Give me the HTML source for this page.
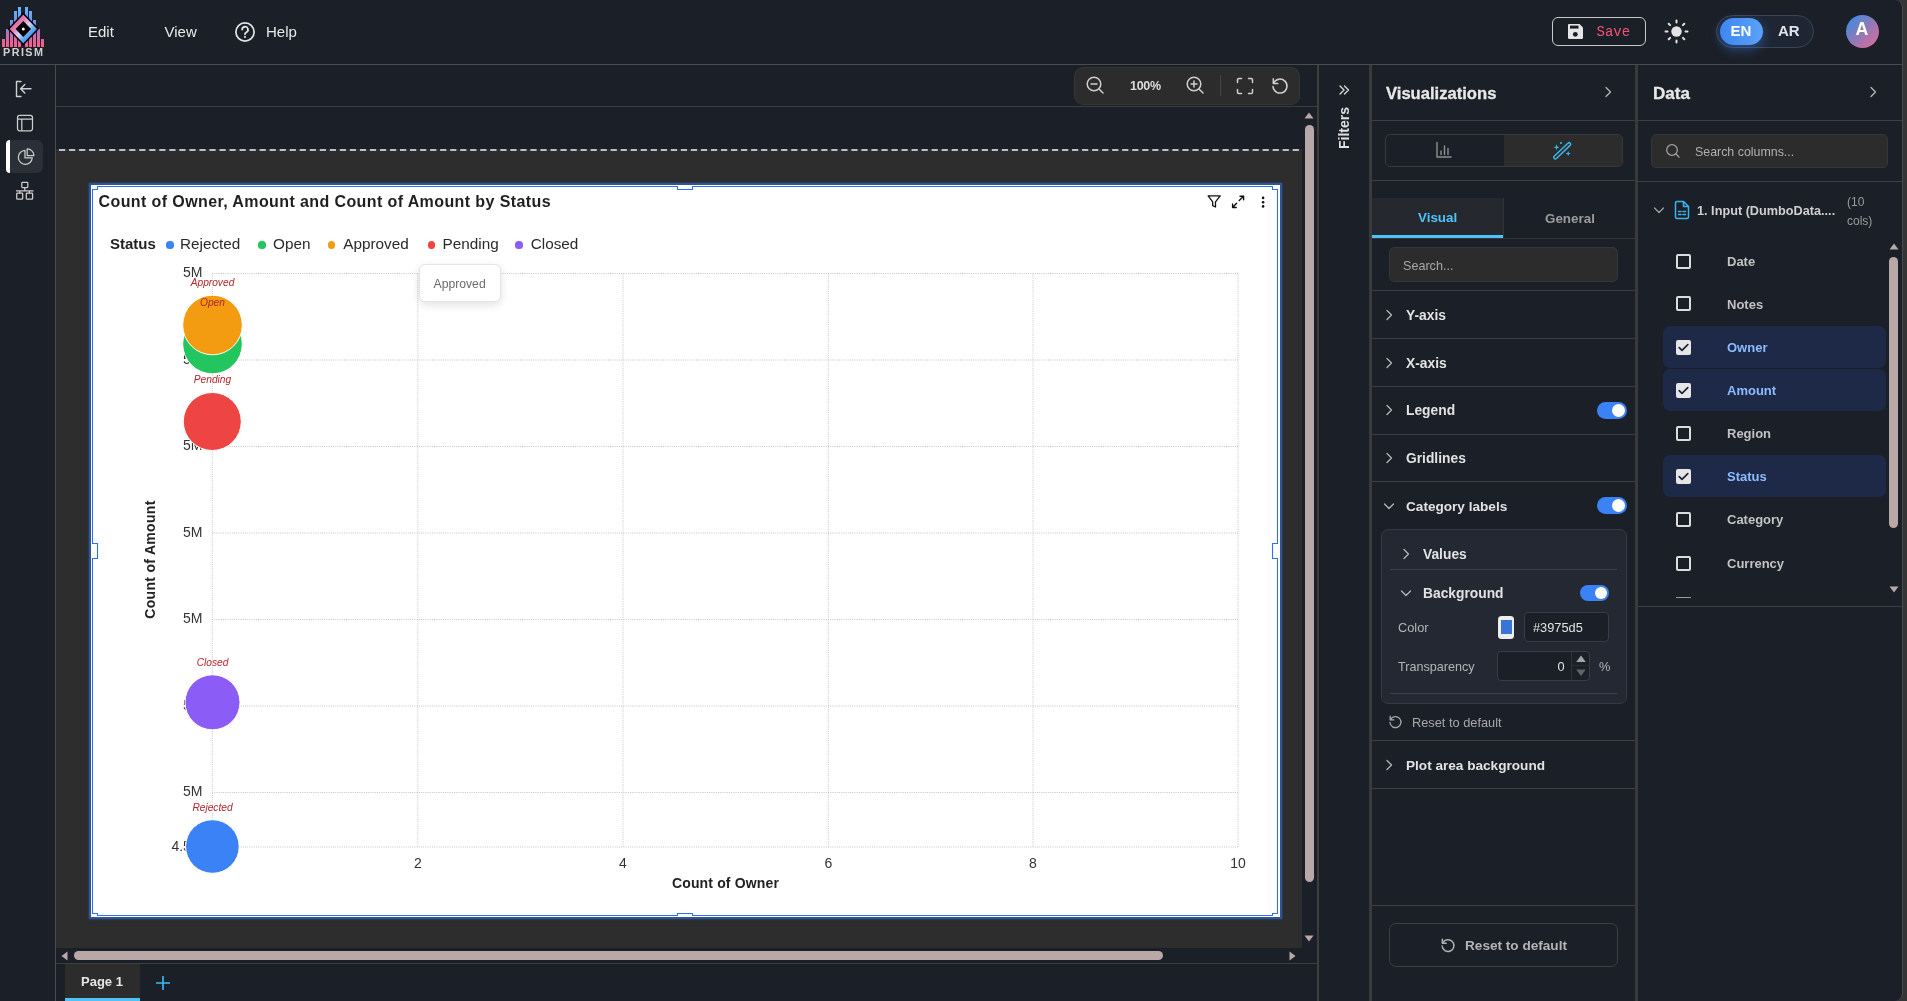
<!DOCTYPE html>
<html><head><meta charset="utf-8">
<style>
*{box-sizing:border-box;margin:0;padding:0}
html,body{width:1907px;height:1001px;overflow:hidden;background:#353535;font-family:"Liberation Sans",sans-serif}
.a{position:absolute}
#app{will-change:transform;position:absolute;left:0;top:0;width:1903px;height:1001px;background:#1b1f27;border-right:1px solid #4a4a4a;border-radius:0 8px 8px 0;overflow:hidden}
.hl{position:absolute;height:1px;background:#3f3f3f}
.vl{position:absolute;width:1px;background:#3f3f3f}
.t{position:absolute;white-space:nowrap;line-height:1}
svg{position:absolute;overflow:visible}
</style></head><body>
<div id="app">
<!-- HEADER -->
<div class="hl" style="left:0;top:64px;width:1903px;background:#4a4a4a"></div>
<div class="t" style="left:88px;top:23.6px;font-size:15px;color:#e8e8e8">Edit</div>
<div class="t" style="left:164.5px;top:23.6px;font-size:15px;color:#e8e8e8">View</div>
<div class="t" style="left:266px;top:23.6px;font-size:15px;color:#e8e8e8">Help</div>
<svg style="left:0;top:0" width="50" height="64">
 <defs>
  <linearGradient id="bars" gradientUnits="userSpaceOnUse" x1="0" y1="7" x2="0" y2="47"><stop offset="0" stop-color="#62b6ff"/><stop offset="0.45" stop-color="#6f8ee8"/><stop offset="0.6" stop-color="#b071c0"/><stop offset="1" stop-color="#ff5c86"/></linearGradient>
  <linearGradient id="dia" gradientUnits="userSpaceOnUse" x1="14" y1="20" x2="33" y2="39"><stop offset="0" stop-color="#e0609c"/><stop offset="0.25" stop-color="#e27fb4"/><stop offset="0.5" stop-color="#dcd0f2"/><stop offset="0.75" stop-color="#5aa8f0"/><stop offset="1" stop-color="#2a90f0"/></linearGradient>
  <linearGradient id="txt" x1="0" y1="0" x2="1" y2="0"><stop offset="0" stop-color="#bfbfbf"/><stop offset="0.5" stop-color="#f0f0f0"/><stop offset="1" stop-color="#bfbfbf"/></linearGradient>
 </defs>
 <g fill="url(#bars)">
  <rect x="2" y="39" width="3" height="8"/><rect x="6" y="29" width="3" height="18"/><rect x="10" y="20" width="3" height="27"/><rect x="14" y="11" width="3" height="36"/><rect x="18" y="7" width="3" height="40"/>
  <rect x="25" y="7" width="3" height="40"/><rect x="29" y="11" width="3" height="36"/><rect x="33" y="20" width="3" height="27"/><rect x="37" y="29" width="3" height="18"/><rect x="41" y="39" width="3" height="8"/>
 </g>
 <path d="M23.3 13.5 L38 29 L23.3 44.5 L8.6 29 Z" fill="url(#dia)" stroke="#000" stroke-width="1.5"/>
 <path d="M23.3 21 L31 29 L23.3 37 L15.6 29 Z" fill="#000"/>
 <circle cx="23.3" cy="29" r="1.5" fill="#fff"/>
 <text x="3" y="56" textLength="40" lengthAdjust="spacing" font-family="Liberation Sans" font-weight="bold" font-size="10.8" fill="#d0d0d0">PRISM</text>
</svg>
<svg style="left:234px;top:21px" width="22" height="22" viewBox="0 0 22 22"><circle cx="11" cy="11" r="9.1" fill="none" stroke="#e4e4e4" stroke-width="1.7"/><path d="M8.2 8.6a2.9 2.9 0 1 1 4.2 2.6c-.9.5-1.4 1-1.4 2.1" fill="none" stroke="#e4e4e4" stroke-width="1.8" stroke-linecap="round"/><circle cx="11" cy="16" r="1.1" fill="#e4e4e4"/></svg>
<!-- save -->
<div class="a" style="left:1552px;top:17px;width:94px;height:29px;border:1.6px solid #c9c9c9;border-radius:6px"></div>
<svg style="left:1567px;top:23px" width="17" height="17" viewBox="0 0 17 17"><path d="M1 2.2C1 1.5 1.5 1 2.2 1H12.5L16 4.5V14.8C16 15.5 15.5 16 14.8 16H2.2C1.5 16 1 15.5 1 14.8Z" fill="#e6e6e6"/><rect x="3" y="2.6" width="8.5" height="3" fill="#1b1f27"/><circle cx="8.3" cy="11.3" r="2.4" fill="#1b1f27"/></svg>
<div class="t" style="left:1596.5px;top:25px;font-family:'Liberation Mono';font-size:14px;color:#f25476">Save</div>
<svg style="left:1664px;top:19px" width="25" height="25" viewBox="0 0 25 25"><circle cx="12.5" cy="12.5" r="5.2" fill="#e4e4e4"/><g stroke="#e4e4e4" stroke-width="2" stroke-linecap="round"><path d="M12.5 1.5v2M12.5 21.5v2M1.5 12.5h2M21.5 12.5h2M4.7 4.7l1.4 1.4M18.9 18.9l1.4 1.4M4.7 20.3l1.4-1.4M18.9 6.1l1.4-1.4"/></g></svg>
<!-- EN/AR -->
<div class="a" style="left:1716px;top:15px;width:98px;height:33px;border:1.3px solid #3b4558;border-radius:17px;background:#1f2633"></div>
<div class="a" style="left:1720px;top:18px;width:43px;height:27px;border-radius:14px;background:linear-gradient(90deg,#3f86f2,#5aa2f8);box-shadow:0 4px 12px rgba(59,130,246,0.45)"></div>
<div class="t" style="left:1730.5px;top:23px;font-size:15px;font-weight:bold;color:#fff">EN</div>
<div class="t" style="left:1778px;top:23px;font-size:15px;font-weight:bold;color:#dfe3ea">AR</div>
<div class="a" style="left:1846px;top:15px;width:33px;height:33px;border-radius:50%;background:linear-gradient(135deg,#3d8be0 10%,#8f7ab8 50%,#e06a9a 95%)"></div>
<div class="t" style="left:1855.4px;top:20.8px;font-size:17.8px;font-weight:bold;color:#fff">A</div>

<!-- SIDEBAR -->
<div class="vl" style="left:55px;top:65px;height:936px;background:#4a4a4a"></div>
<svg style="left:14px;top:79px" width="20" height="20" viewBox="0 0 20 20"><g fill="none" stroke="#d0d0d0" stroke-width="1.4" stroke-linecap="round" stroke-linejoin="round"><path d="M7 2.5H2.5V17.5H7"/><path d="M17 9.8H7M10.8 5.6L6.6 9.8L10.8 14"/></g></svg>
<svg style="left:16px;top:114px" width="18" height="18" viewBox="0 0 18 18"><g fill="none" stroke="#cdcdcd" stroke-width="1.25"><rect x="1.5" y="1.3" width="15" height="15.5" rx="2.2"/><path d="M1.5 5.2H16.5M5.8 5.2V16.8"/></g></svg>
<div class="a" style="left:6px;top:140px;width:37px;height:33px;background:#2b2f38;border-radius:6px"></div>
<div class="a" style="left:6px;top:140px;width:4px;height:33px;background:#fff;border-radius:4px 0 0 4px"></div>
<svg style="left:17px;top:148px" width="18" height="18" viewBox="0 0 18 18"><g fill="none" stroke="#cdcdcd" stroke-width="1.25" stroke-linejoin="round"><path d="M8 2.3A7 7 0 1 0 15.3 9.8H8Z"/><path d="M10.2 0.8A6.8 6.8 0 0 1 16.9 7.6H10.2Z"/></g></svg>
<svg style="left:15px;top:181px" width="20" height="20" viewBox="0 0 20 20"><g fill="none" stroke="#cdcdcd" stroke-width="1.25"><rect x="6.8" y="1.3" width="6" height="5.2" rx="0.8"/><rect x="1.7" y="12.2" width="6" height="6" rx="0.8"/><rect x="11.3" y="12.2" width="6.3" height="6" rx="0.8"/><path d="M9.8 6.5V9.8M1 9.8H18.5M4.7 9.8V12.2M14.4 9.8V12.2"/></g></svg>

<!-- CANVAS AREA -->
<div class="hl" style="left:56px;top:106px;width:1262px;background:#3d3d3d"></div>
<div class="a" style="left:56px;top:149px;width:1246px;height:799px;background:#2d2d2d"></div>
<!-- CHART -->
<div class="a" style="left:88.5px;top:182.5px;width:1193px;height:736.5px;background:#fff;border:2.4px solid #2d5597;box-shadow:0 0 2px #2d5597"></div>
<svg style="left:0;top:0" width="1907" height="1001"><g stroke="#c4c4c4" stroke-width="1" stroke-dasharray="1 1.2"><line x1="212.4" y1="273.5" x2="212.4" y2="847"/><line x1="417.8" y1="273.5" x2="417.8" y2="847"/><line x1="623" y1="273.5" x2="623" y2="847"/><line x1="828.4" y1="273.5" x2="828.4" y2="847"/><line x1="1033" y1="273.5" x2="1033" y2="847"/><line x1="1238" y1="273.5" x2="1238" y2="847"/><line x1="212" y1="273.5" x2="1238.5" y2="273.5"/><line x1="212" y1="360" x2="1238.5" y2="360"/><line x1="212" y1="446.5" x2="1238.5" y2="446.5"/><line x1="212" y1="533" x2="1238.5" y2="533"/><line x1="212" y1="619.5" x2="1238.5" y2="619.5"/><line x1="212" y1="706" x2="1238.5" y2="706"/><line x1="212" y1="792.5" x2="1238.5" y2="792.5"/><line x1="212" y1="847" x2="1238.5" y2="847"/></g><g font-family="Liberation Sans" font-size="14" fill="#333"><text x="202.5" y="276.5" text-anchor="end">5M</text><text x="202.5" y="363.5" text-anchor="end">5M</text><text x="202.5" y="450.0" text-anchor="end">5M</text><text x="202.5" y="536.5" text-anchor="end">5M</text><text x="202.5" y="623.0" text-anchor="end">5M</text><text x="202.5" y="709.5" text-anchor="end">5M</text><text x="202.5" y="796.0" text-anchor="end">5M</text><text x="202.5" y="850.5" text-anchor="end">4.5M</text><text x="417.8" y="867.5" text-anchor="middle">2</text><text x="623" y="867.5" text-anchor="middle">4</text><text x="828.4" y="867.5" text-anchor="middle">6</text><text x="1033" y="867.5" text-anchor="middle">8</text><text x="1238" y="867.5" text-anchor="middle">10</text></g><text x="725.5" y="888.3" text-anchor="middle" font-family="Liberation Sans" font-size="14" font-weight="bold" fill="#222" letter-spacing="0.15">Count of Owner</text><text transform="translate(155 559.5) rotate(-90)" x="0" y="0" text-anchor="middle" font-family="Liberation Sans" font-size="14" font-weight="bold" fill="#222" letter-spacing="0.3">Count of Amount</text><g stroke="#fff" stroke-width="1"><circle cx="212.4" cy="846.5" r="26.8" fill="#3b82f6"/><circle cx="212.5" cy="702.3" r="27.5" fill="#8b5cf6"/><circle cx="212.3" cy="421.5" r="29" fill="#ef4444"/><circle cx="212.5" cy="344" r="29.8" fill="#22c55e"/><circle cx="212.5" cy="325" r="29.8" fill="#f39c12"/></g><g font-family="Liberation Sans" font-size="10.2" font-style="italic" fill="#b3262b" text-anchor="middle"><text x="212.5" y="286.1">Approved</text><text x="212.5" y="306.1">Open</text><text x="212.5" y="383.1">Pending</text><text x="212.5" y="666.1">Closed</text><text x="212.5" y="810.6">Rejected</text></g></svg>
<div class="t" style="left:98.5px;top:194px;font-size:16px;font-weight:bold;color:#1f1f1f;letter-spacing:0.4px">Count of Owner, Amount and Count of Amount by Status</div>
<div class="t" style="left:110px;top:236px;font-size:15px;font-weight:bold;color:#1f1f1f">Status</div>
<div class="a" style="left:166.4px;top:241.4px;width:7.2px;height:7.2px;border-radius:50%;background:#3b82f6"></div>
<div class="t" style="left:180px;top:236px;font-size:15.3px;color:#2a2a2a">Rejected</div>
<div class="a" style="left:258.4px;top:241.4px;width:7.2px;height:7.2px;border-radius:50%;background:#22c55e"></div>
<div class="t" style="left:273px;top:236px;font-size:15.3px;color:#2a2a2a">Open</div>
<div class="a" style="left:328.09999999999997px;top:241.4px;width:7.2px;height:7.2px;border-radius:50%;background:#f39c12"></div>
<div class="t" style="left:343.2px;top:236px;font-size:15.3px;color:#2a2a2a">Approved</div>
<div class="a" style="left:427.59999999999997px;top:241.4px;width:7.2px;height:7.2px;border-radius:50%;background:#ef4444"></div>
<div class="t" style="left:442.6px;top:236px;font-size:15.3px;color:#2a2a2a">Pending</div>
<div class="a" style="left:515.4px;top:241.4px;width:7.2px;height:7.2px;border-radius:50%;background:#8b5cf6"></div>
<div class="t" style="left:530.7px;top:236px;font-size:15.3px;color:#2a2a2a">Closed</div>
<div class="a" style="left:419px;top:263.5px;width:82px;height:38.5px;background:#fff;border:1px solid #e3e3e3;border-radius:6px;box-shadow:0 3px 10px rgba(0,0,0,0.12)"></div>
<div class="t" style="left:433.5px;top:278px;font-size:12.2px;color:#6a6a6a">Approved</div>
<svg style="left:1205px;top:193px" width="18" height="17" viewBox="1205 193 18 17"><path d="M1208.2 195.8H1220.2L1215.5 201.8V207L1212.7 205.6V201.8Z" fill="none" stroke="#111" stroke-width="1.3" stroke-linejoin="round"/></svg>
<svg style="left:1229px;top:193px" width="18" height="18" viewBox="1229 193 18 18"><g fill="none" stroke="#111" stroke-width="1.4" stroke-linecap="round" stroke-linejoin="round"><path d="M1239.2 200.5L1243.6 196.2M1240 196.2H1243.6V199.8"/><path d="M1236.6 203.2L1232.6 207.5M1232.6 203.9V207.5H1236.2"/></g></svg>
<svg style="left:1259px;top:194px" width="8" height="16" viewBox="1259 194 8 16"><g fill="#111"><circle cx="1263.1" cy="197.9" r="1.3"/><circle cx="1263.1" cy="202.2" r="1.3"/><circle cx="1263.1" cy="206.4" r="1.3"/></g></svg>
<svg style="left:0;top:0" width="1907" height="1001"><g fill="none" stroke="#2f6ff0" stroke-width="1.1"><path d="M97.5 186.5H677.5V189.5H692.5V186.5H1272.5V189.5H1277.5V543.5H1272.5V558.5H1277.5V913.5H1272.5V915.5H692.5V913.5H677.5V915.5H97.5V913.5H92.5V558.5H97.5V543.5H92.5V189.5H97.5Z"/></g></svg>
<div class="a" style="left:1317px;top:65px;width:2px;height:936px;background:#413e3a"></div>
<!-- toolbar -->
<div class="a" style="left:1074px;top:67px;width:226px;height:38px;background:#2c2c2c;border:1px solid #353535;border-radius:9px"></div>
<svg style="left:1085px;top:75px" width="20" height="20" viewBox="0 0 20 20"><g fill="none" stroke="#cfcfcf" stroke-width="1.5" stroke-linecap="round"><circle cx="9" cy="9" r="6.8"/><path d="M14 14L18 18M6 9H12"/></g></svg>
<div class="t" style="left:1130px;top:80px;font-size:12.5px;font-weight:bold;color:#dcdcdc;letter-spacing:-0.3px">100%</div>
<svg style="left:1185px;top:75px" width="20" height="20" viewBox="0 0 20 20"><g fill="none" stroke="#cfcfcf" stroke-width="1.5" stroke-linecap="round"><circle cx="9" cy="9" r="6.8"/><path d="M14 14L18 18M6 9H12M9 6V12"/></g></svg>
<div class="a" style="left:1220px;top:75px;width:1px;height:21px;background:#444"></div>
<svg style="left:1236px;top:77px" width="18" height="18" viewBox="0 0 18 18"><g fill="none" stroke="#cfcfcf" stroke-width="1.5" stroke-linecap="round" stroke-linejoin="round"><path d="M1.5 5.5V2.8Q1.5 1.5 2.8 1.5H5.5M12.5 1.5H15.2Q16.5 1.5 16.5 2.8V5.5M16.5 12.5V15.2Q16.5 16.5 15.2 16.5H12.5M5.5 16.5H2.8Q1.5 16.5 1.5 15.2V12.5"/></g></svg>
<svg style="left:1271px;top:77px" width="18" height="18" viewBox="0 0 18 18"><g fill="none" stroke="#cfcfcf" stroke-width="1.5" stroke-linecap="round" stroke-linejoin="round"><path d="M2.6 6.2A7 7 0 1 1 2 9.5"/><path d="M2.3 1.8V6.4H6.8"/></g></svg>
<!-- dashed line -->
<svg style="left:0;top:140px" width="1310" height="20"><line x1="59" y1="10" x2="1300" y2="10" stroke="#b9c0cc" stroke-width="2" stroke-dasharray="6.2 3.83"/></svg>
<!-- v scrollbar -->
<svg style="left:1303px;top:111px" width="12" height="9" viewBox="0 0 12 9"><path d="M6 1.5L10.5 7.5H1.5Z" fill="#b8a8a8"/></svg>
<div class="a" style="left:1305px;top:125px;width:9px;height:757px;background:#b8a8a8;border-radius:5px"></div>
<svg style="left:1303px;top:934px" width="12" height="9" viewBox="0 0 12 9"><path d="M6 7.5L10.5 1.5H1.5Z" fill="#b8a8a8"/></svg>
<!-- h scrollbar -->
<svg style="left:58px;top:950px" width="12" height="12" viewBox="0 0 12 12"><path d="M3.5 6L9.5 1.5V10.5Z" fill="#b8a8a8"/></svg>
<div class="a" style="left:74px;top:951px;width:1089px;height:9px;background:#b8a8a8;border-radius:5px"></div>
<svg style="left:1287px;top:950px" width="12" height="12" viewBox="0 0 12 12"><path d="M8.5 6L2.5 1.5V10.5Z" fill="#b8a8a8"/></svg>
<div class="hl" style="left:56px;top:963px;width:1262px;background:#3d3d3d"></div>
<!-- page tabs -->
<div class="a" style="left:65px;top:964px;width:75px;height:37px;background:#2c2c2c"></div>
<div class="a" style="left:65px;top:998px;width:75px;height:3px;background:#4fc3f7"></div>
<div class="t" style="left:81px;top:975px;font-size:13px;font-weight:bold;color:#e6e6e6">Page 1</div>
<svg style="left:155px;top:975px" width="16" height="16" viewBox="0 0 16 16"><path d="M8 1V15M1 8H15" stroke="#38bdf8" stroke-width="1.6"/></svg>
<!-- filters column -->
<svg style="left:1338px;top:84px" width="12" height="12" viewBox="0 0 12 12"><g fill="none" stroke="#d6d6d6" stroke-width="1.4" stroke-linecap="round" stroke-linejoin="round"><path d="M2 2L6 6L2 10M6.5 2L10.5 6L6.5 10"/></g></svg>
<div class="t" style="left:1344px;top:128px;font-size:14px;font-weight:bold;color:#e0e0e0;transform:translate(-50%,-50%) rotate(-90deg);transform-origin:center">Filters</div>

<!-- VIS PANEL -->
<div class="a" style="left:1369px;top:65px;width:3px;height:936px;background:#3a3a3a"></div>
<div class="a" style="left:1635px;top:65px;width:3px;height:936px;background:#3a3a3a"></div>
<div class="t" style="left:1386px;top:86px;font-size:16.6px;font-weight:bold;color:#e8e8e8;-webkit-text-stroke:0.3px #e8e8e8">Visualizations</div>
<svg style="left:1602px;top:86px" width="12" height="12" viewBox="0 0 12 12"><path d="M4 1.5L8.5 6L4 10.5" fill="none" stroke="#b5b5b5" stroke-width="1.3" stroke-linecap="round" stroke-linejoin="round"/></svg>
<div class="hl" style="left:1372px;top:120px;width:263px"></div>
<div class="a" style="left:1385px;top:134px;width:238px;height:33px;border:1px solid #3a3a3a;border-radius:5px;overflow:hidden"><div class="a" style="left:118px;top:0;width:120px;height:33px;background:#2c2c2c"></div></div>
<svg style="left:1435px;top:141px" width="18" height="18" viewBox="0 0 18 18"><g fill="none" stroke="#8e8e8e" stroke-width="1.4" stroke-linecap="round"><path d="M2 1.5V16H16"/><path d="M6 10V13.5M9.5 5V13.5M13 7.5V13.5"/></g></svg>
<svg style="left:1551px;top:140px" width="22" height="20" viewBox="0 0 22 20"><g fill="none" stroke="#38b6f0" stroke-width="1.5" stroke-linecap="round" stroke-linejoin="round"><path d="M3.2 16.3L16.9 3.2Q18 2.1 19.1 3.2Q20.2 4.3 19.1 5.4L5.4 18.5Q4.3 19.6 3.2 18.5Q2.1 17.4 3.2 16.3Z"/></g><g fill="#38b6f0"><path d="M5.5 4.2L6.3 6.4L8.5 7.2L6.3 8L5.5 10.2L4.7 8L2.5 7.2L4.7 6.4Z"/><path d="M17.2 11L17.9 12.8L19.7 13.5L17.9 14.2L17.2 16L16.5 14.2L14.7 13.5L16.5 12.8Z"/><circle cx="10" cy="3" r="1.1"/></g></svg>
<div class="hl" style="left:1372px;top:180px;width:263px"></div>
<!-- tabs -->
<div class="a" style="left:1372px;top:198px;width:131px;height:40px;background:#25292f"></div>
<div class="a" style="left:1503px;top:198px;width:1px;height:40px;background:#333"></div>
<div class="a" style="left:1372px;top:235px;width:131px;height:3px;background:#4fc3f7"></div>
<div class="hl" style="left:1372px;top:238px;width:263px;background:#363636"></div>
<div class="t" style="left:1418px;top:211px;font-size:13.4px;font-weight:bold;color:#4fc3f7">Visual</div>
<div class="t" style="left:1545px;top:212px;font-size:13.4px;font-weight:bold;color:#9c9c9c">General</div>
<div class="a" style="left:1389px;top:247px;width:229px;height:35px;background:#2c2c2c;border:1px solid #363636;border-radius:5px"></div>
<div class="t" style="left:1403px;top:259.5px;font-size:12.6px;color:#a8a8a8">Search...</div>
<div class="hl" style="left:1372px;top:290px;width:263px"></div>
<!-- sections -->
<svg style="left:1383px;top:309px" width="12" height="12" viewBox="0 0 12 12"><path d="M4 1.5L8.5 6L4 10.5" fill="none" stroke="#b5b5b5" stroke-width="1.3" stroke-linecap="round" stroke-linejoin="round"/></svg>
<div class="t" style="left:1406px;top:309px;font-size:13.8px;font-weight:bold;color:#e2e2e2">Y-axis</div>
<div class="hl" style="left:1372px;top:338px;width:263px"></div>
<svg style="left:1383px;top:357px" width="12" height="12" viewBox="0 0 12 12"><path d="M4 1.5L8.5 6L4 10.5" fill="none" stroke="#b5b5b5" stroke-width="1.3" stroke-linecap="round" stroke-linejoin="round"/></svg>
<div class="t" style="left:1406px;top:357px;font-size:13.8px;font-weight:bold;color:#e2e2e2">X-axis</div>
<div class="hl" style="left:1372px;top:386px;width:263px"></div>
<svg style="left:1383px;top:404px" width="12" height="12" viewBox="0 0 12 12"><path d="M4 1.5L8.5 6L4 10.5" fill="none" stroke="#b5b5b5" stroke-width="1.3" stroke-linecap="round" stroke-linejoin="round"/></svg>
<div class="t" style="left:1406px;top:404px;font-size:13.8px;font-weight:bold;color:#e2e2e2">Legend</div>
<div class="a" style="left:1597px;top:402px;width:30px;height:17px;border-radius:9px;background:#3b82f6"><div class="a" style="left:15px;top:2px;width:13px;height:13px;border-radius:50%;background:#fff"></div></div>
<div class="hl" style="left:1372px;top:434px;width:263px"></div>
<svg style="left:1383px;top:452px" width="12" height="12" viewBox="0 0 12 12"><path d="M4 1.5L8.5 6L4 10.5" fill="none" stroke="#b5b5b5" stroke-width="1.3" stroke-linecap="round" stroke-linejoin="round"/></svg>
<div class="t" style="left:1406px;top:452px;font-size:13.8px;font-weight:bold;color:#e2e2e2">Gridlines</div>
<div class="hl" style="left:1372px;top:481px;width:263px"></div>
<svg style="left:1383px;top:500px" width="12" height="12" viewBox="0 0 12 12"><path d="M1.5 4L6 8.5L10.5 4" fill="none" stroke="#b5b5b5" stroke-width="1.3" stroke-linecap="round" stroke-linejoin="round"/></svg>
<div class="t" style="left:1406px;top:500px;font-size:13.6px;font-weight:bold;color:#e2e2e2">Category labels</div>
<div class="a" style="left:1597px;top:497px;width:30px;height:17px;border-radius:9px;background:#3b82f6"><div class="a" style="left:15px;top:2px;width:13px;height:13px;border-radius:50%;background:#fff"></div></div>
<!-- inner card -->
<div class="a" style="left:1381px;top:529px;width:246px;height:175px;background:#232833;border:1px solid #363a42;border-radius:7px"></div>
<svg style="left:1400px;top:548px" width="12" height="12" viewBox="0 0 12 12"><path d="M4 1.5L8.5 6L4 10.5" fill="none" stroke="#b5b5b5" stroke-width="1.3" stroke-linecap="round" stroke-linejoin="round"/></svg>
<div class="t" style="left:1423px;top:548px;font-size:13.8px;font-weight:bold;color:#e2e2e2">Values</div>
<div class="a" style="left:1390px;top:569px;width:227px;height:1px;background:#3c3f45"></div>
<svg style="left:1400px;top:587px" width="12" height="12" viewBox="0 0 12 12"><path d="M1.5 4L6 8.5L10.5 4" fill="none" stroke="#b5b5b5" stroke-width="1.3" stroke-linecap="round" stroke-linejoin="round"/></svg>
<div class="t" style="left:1423px;top:587px;font-size:13.8px;font-weight:bold;color:#e2e2e2">Background</div>
<div class="a" style="left:1580px;top:585px;width:29px;height:16px;border-radius:8px;background:#3b82f6"><div class="a" style="left:14.5px;top:2px;width:12px;height:12px;border-radius:50%;background:#fff"></div></div>
<div class="t" style="left:1398px;top:622px;font-size:12.8px;color:#b4b4b4">Color</div>
<div class="a" style="left:1498px;top:616px;width:16px;height:23px;border-radius:3.5px;background:#eeeeee"><div class="a" style="left:2.5px;top:4px;width:11px;height:14px;background:#3975d5"></div></div>
<div class="a" style="left:1524px;top:612px;width:85px;height:30px;background:#1b1f27;border:1px solid #3a3d44;border-radius:4px"></div>
<div class="t" style="left:1533px;top:622px;font-size:12.8px;color:#e2e2e2">#3975d5</div>
<div class="t" style="left:1398px;top:661px;font-size:12.6px;color:#b4b4b4">Transparency</div>
<div class="a" style="left:1497px;top:651px;width:93px;height:30px;background:#1b1f27;border:1px solid #3a3d44;border-radius:4px"></div>
<div class="a" style="left:1571px;top:652px;width:1px;height:28px;background:#333"></div>
<div class="t" style="left:1557.5px;top:661px;font-size:12.8px;color:#e2e2e2">0</div>
<div class="a" style="left:1572px;top:665px;width:18px;height:1px;background:#2a2d33"></div><svg style="left:1574px;top:654px" width="14" height="24" viewBox="0 0 14 24"><path d="M7 1.5L11.8 8H2.2Z" fill="#a0a4ab"/><path d="M7 22L11.8 15.5H2.2Z" fill="#5f636a"/></svg>
<div class="t" style="left:1599px;top:661px;font-size:12.8px;color:#b4b4b4">%</div>
<div class="a" style="left:1390px;top:693px;width:227px;height:1px;background:#3c3f45"></div>
<svg style="left:1388px;top:715px" width="14" height="14" viewBox="0 0 14 14"><g fill="none" stroke="#a8a8a8" stroke-width="1.3" stroke-linecap="round" stroke-linejoin="round"><path d="M2.6 4.6A5.5 5.5 0 1 1 2 7.5"/><path d="M2.2 1.2V4.9H5.8"/></g></svg>
<div class="t" style="left:1412px;top:717px;font-size:12.8px;color:#a8a8a8">Reset to default</div>
<div class="hl" style="left:1372px;top:740px;width:263px"></div>
<svg style="left:1383px;top:759px" width="12" height="12" viewBox="0 0 12 12"><path d="M4 1.5L8.5 6L4 10.5" fill="none" stroke="#b5b5b5" stroke-width="1.3" stroke-linecap="round" stroke-linejoin="round"/></svg>
<div class="t" style="left:1406px;top:759px;font-size:13.6px;font-weight:bold;color:#e2e2e2">Plot area background</div>
<div class="hl" style="left:1372px;top:788px;width:263px"></div>
<div class="hl" style="left:1372px;top:905px;width:263px"></div>
<div class="a" style="left:1389px;top:923px;width:229px;height:44px;border:1px solid #3f3f3f;border-radius:7px"></div>
<svg style="left:1440px;top:938px" width="15" height="15" viewBox="0 0 14 14"><g fill="none" stroke="#b0b0b0" stroke-width="1.4" stroke-linecap="round" stroke-linejoin="round"><path d="M2.6 4.6A5.5 5.5 0 1 1 2 7.5"/><path d="M2.2 1.2V4.9H5.8"/></g></svg>
<div class="t" style="left:1465px;top:939px;font-size:13.6px;font-weight:bold;color:#b4b4b4">Reset to default</div>

<!-- DATA PANEL -->
<div class="t" style="left:1653px;top:85px;font-size:17px;font-weight:bold;color:#e8e8e8;-webkit-text-stroke:0.3px #e8e8e8">Data</div>
<svg style="left:1867px;top:86px" width="12" height="12" viewBox="0 0 12 12"><path d="M4 1.5L8.5 6L4 10.5" fill="none" stroke="#b5b5b5" stroke-width="1.3" stroke-linecap="round" stroke-linejoin="round"/></svg>
<div class="hl" style="left:1638px;top:120px;width:264px"></div>
<div class="a" style="left:1651px;top:134px;width:237px;height:34px;background:#2c2c2c;border:1px solid #363636;border-radius:5px"></div>
<svg style="left:1665px;top:143px" width="16" height="16" viewBox="0 0 16 16"><g fill="none" stroke="#a0a0a0" stroke-width="1.3" stroke-linecap="round"><circle cx="7" cy="7" r="5.3"/><path d="M11 11L14 14"/></g></svg>
<div class="t" style="left:1695px;top:146px;font-size:12.4px;color:#b0b0b0">Search columns...</div>
<div class="hl" style="left:1638px;top:181px;width:264px"></div>
<svg style="left:1653px;top:204px" width="12" height="12" viewBox="0 0 12 12"><path d="M1.5 4L6 8.5L10.5 4" fill="none" stroke="#a0a0a0" stroke-width="1.3" stroke-linecap="round" stroke-linejoin="round"/></svg>
<svg style="left:1673px;top:200px" width="18" height="20" viewBox="0 0 18 20"><g fill="none" stroke="#38b6f0" stroke-width="1.5" stroke-linejoin="round"><path d="M2.5 3Q2.5 1.5 4 1.5H10.5L15.5 6.5V17Q15.5 18.5 14 18.5H4Q2.5 18.5 2.5 17Z"/><path d="M10.5 1.5V6.5H15.5"/><path d="M5.5 11.5H8M10 11.5H12.5M5.5 14.5H8M10 14.5H12.5" stroke-linecap="round"/></g></svg>
<div class="t" style="left:1697px;top:204.8px;font-size:12.7px;font-weight:bold;color:#cfcfcf">1. Input (DumboData....</div>
<div class="t" style="left:1847px;top:196px;font-size:12px;color:#9a9a9a">(10</div>
<div class="t" style="left:1847px;top:214.5px;font-size:12px;color:#9a9a9a">cols)</div>
<div class="a" style="left:1663px;top:325.5px;width:223px;height:42px;background:#1e2947;border-radius:7px"></div>
<div class="a" style="left:1663px;top:368.5px;width:223px;height:42px;background:#1e2947;border-radius:7px"></div>
<div class="a" style="left:1663px;top:454.5px;width:223px;height:42px;background:#1e2947;border-radius:7px"></div>
<div class="a" style="left:1676px;top:253.5px;width:15px;height:15px;border:2px solid #dcdcdc;border-radius:2px"></div>
<div class="t" style="left:1727px;top:255px;font-size:13px;font-weight:bold;color:#c2c2c2">Date</div>
<div class="a" style="left:1676px;top:296.0px;width:15px;height:15px;border:2px solid #dcdcdc;border-radius:2px"></div>
<div class="t" style="left:1727px;top:297.5px;font-size:13px;font-weight:bold;color:#c2c2c2">Notes</div>
<div class="a" style="left:1676px;top:339.5px;width:15px;height:15px;background:#e6e6e6;border-radius:2px"></div>
<svg style="left:1676px;top:339.5px" width="15" height="15" viewBox="0 0 15 15"><path d="M3.2 7.6L6 10.4L11.8 4.6" fill="none" stroke="#1b2440" stroke-width="1.7" stroke-linecap="round" stroke-linejoin="round"/></svg>
<div class="t" style="left:1727px;top:341px;font-size:13px;font-weight:bold;color:#8cbcff">Owner</div>
<div class="a" style="left:1676px;top:382.5px;width:15px;height:15px;background:#e6e6e6;border-radius:2px"></div>
<svg style="left:1676px;top:382.5px" width="15" height="15" viewBox="0 0 15 15"><path d="M3.2 7.6L6 10.4L11.8 4.6" fill="none" stroke="#1b2440" stroke-width="1.7" stroke-linecap="round" stroke-linejoin="round"/></svg>
<div class="t" style="left:1727px;top:384px;font-size:13px;font-weight:bold;color:#8cbcff">Amount</div>
<div class="a" style="left:1676px;top:425.5px;width:15px;height:15px;border:2px solid #dcdcdc;border-radius:2px"></div>
<div class="t" style="left:1727px;top:427px;font-size:13px;font-weight:bold;color:#c2c2c2">Region</div>
<div class="a" style="left:1676px;top:468.5px;width:15px;height:15px;background:#e6e6e6;border-radius:2px"></div>
<svg style="left:1676px;top:468.5px" width="15" height="15" viewBox="0 0 15 15"><path d="M3.2 7.6L6 10.4L11.8 4.6" fill="none" stroke="#1b2440" stroke-width="1.7" stroke-linecap="round" stroke-linejoin="round"/></svg>
<div class="t" style="left:1727px;top:470px;font-size:13px;font-weight:bold;color:#8cbcff">Status</div>
<div class="a" style="left:1676px;top:511.5px;width:15px;height:15px;border:2px solid #dcdcdc;border-radius:2px"></div>
<div class="t" style="left:1727px;top:513px;font-size:13px;font-weight:bold;color:#c2c2c2">Category</div>
<div class="a" style="left:1676px;top:555.5px;width:15px;height:15px;border:2px solid #dcdcdc;border-radius:2px"></div>
<div class="t" style="left:1727px;top:557px;font-size:13px;font-weight:bold;color:#c2c2c2">Currency</div>
<div class="a" style="left:1676px;top:597px;width:15px;height:1.5px;background:#9a9a9a"></div>
<div class="a" style="left:1638px;top:598px;width:250px;height:8px;background:#1b1f27"></div>
<svg style="left:1888px;top:242px" width="12" height="9" viewBox="0 0 12 9"><path d="M6 1.5L10.5 7.5H1.5Z" fill="#b8a8a8"/></svg>
<div class="a" style="left:1889px;top:257px;width:9px;height:271px;background:#b8a8a8;border-radius:5px"></div>
<svg style="left:1888px;top:585px" width="12" height="9" viewBox="0 0 12 9"><path d="M6 7.5L10.5 1.5H1.5Z" fill="#b8a8a8"/></svg>
<div class="hl" style="left:1638px;top:606px;width:264px"></div>

</div>
</body></html>
